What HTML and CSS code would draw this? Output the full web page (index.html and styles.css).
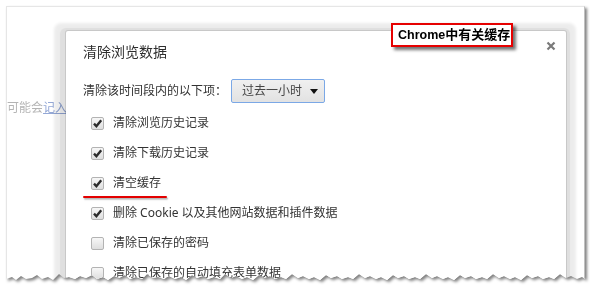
FILE: index.html
```html
<!DOCTYPE html>
<html lang="zh-CN">
<head>
<meta charset="utf-8">
<title>清除浏览数据</title>
<link rel="stylesheet" href="styles.css">
</head>
<body>
<div class="canvas">
  <div class="frame">
    <div class="page">
      <p class="page-text">可能会<a class="page-link">记入</a></p>

      <div class="dialog">
        <div class="dialog-title">清除浏览数据</div>
        <div class="range-row">
          <span class="range-label">清除该时间段内的以下项：</span>
          <div class="select">
            <span>过去一小时</span>
            <svg class="select-arrow" width="8" height="5" viewBox="0 0 8 5"><path d="M0 0H8L4 5Z" fill="#111"/></svg>
          </div>
        </div>
        <ul class="options">
          <li class="option"><span class="cb checked"><svg width="11" height="11" viewBox="0 0 11 11"><path d="M2 5.6 L4.4 8.2 L9.2 2.2" fill="none" stroke="#2b2b2b" stroke-width="2.4" stroke-linejoin="miter"/></svg></span>清除浏览历史记录</li>
          <li class="option"><span class="cb checked"><svg width="11" height="11" viewBox="0 0 11 11"><path d="M2 5.6 L4.4 8.2 L9.2 2.2" fill="none" stroke="#2b2b2b" stroke-width="2.4" stroke-linejoin="miter"/></svg></span>清除下载历史记录</li>
          <li class="option"><span class="cb checked"><svg width="11" height="11" viewBox="0 0 11 11"><path d="M2 5.6 L4.4 8.2 L9.2 2.2" fill="none" stroke="#2b2b2b" stroke-width="2.4" stroke-linejoin="miter"/></svg></span>清空缓存</li>
          <li class="option"><span class="cb checked"><svg width="11" height="11" viewBox="0 0 11 11"><path d="M2 5.6 L4.4 8.2 L9.2 2.2" fill="none" stroke="#2b2b2b" stroke-width="2.4" stroke-linejoin="miter"/></svg></span>删除 Cookie 以及其他网站数据和插件数据</li>
          <li class="option"><span class="cb"></span>清除已保存的密码</li>
          <li class="option"><span class="cb"></span>清除已保存的自动填充表单数据</li>
        </ul>
        <div class="mark-line"></div>
        <svg class="close" width="10" height="10" viewBox="0 0 10 10"><path d="M1.5 1.5 L8.5 8.5 M8.5 1.5 L1.5 8.5" stroke="#7a7a7a" stroke-width="2.2"/></svg>
      </div>

      <div class="callout"><span class="callout-en">Chrome</span>中有关缓存</div>
    </div>
  </div>
</div>
</body>
</html>
```

FILE: styles.css
```css
html, body {
  margin: 0;
  padding: 0;
  background: #ffffff;
}

body {
  width: 593px;
  height: 292px;
  overflow: hidden;
  font-family: "Noto Sans", "Noto Sans CJK SC", sans-serif;
}

.canvas {
  padding: 6px 0 0 6px;
}

.frame {
  width: 580px;
  filter: drop-shadow(2px 2px 1.5px rgba(0, 0, 0, 0.5));
}

.page {
  position: relative;
  box-sizing: border-box;
  width: 579px;
  height: 284px;
  background: #ffffff;
  border-top: 1px solid #e6e6e6;
  border-left: 1px solid #e6e6e6;
  border-right: 1px solid #c0c0c0;
  overflow: hidden;
  clip-path: polygon(0 0, 0 273px, 6px 271px, 10px 274px, 15px 270px, 20px 273px, 26px 272px, 31px 269px, 36px 273px, 42px 271px, 47px 274px, 53px 268px, 58px 272px, 63px 271px, 69px 273px, 74px 270px, 80px 272px, 86px 269px, 91px 273px, 97px 271px, 102px 274px, 108px 270px, 113px 272px, 119px 269px, 124px 273px, 130px 271px, 136px 273px, 141px 268px, 147px 272px, 152px 271px, 158px 273px, 163px 270px, 169px 273px, 175px 271px, 180px 274px, 186px 269px, 191px 272px, 197px 270px, 202px 273px, 208px 271px, 214px 273px, 219px 268px, 225px 272px, 230px 270px, 236px 273px, 241px 271px, 247px 274px, 253px 269px, 258px 272px, 264px 270px, 269px 273px, 275px 271px, 280px 273px, 286px 268px, 292px 272px, 297px 270px, 303px 273px, 308px 271px, 314px 274px, 320px 269px, 325px 272px, 331px 270px, 336px 273px, 342px 271px, 347px 273px, 353px 268px, 359px 272px, 364px 270px, 370px 273px, 375px 271px, 381px 274px, 387px 269px, 392px 272px, 398px 270px, 403px 273px, 409px 271px, 414px 273px, 420px 268px, 426px 272px, 431px 270px, 437px 273px, 442px 271px, 448px 274px, 454px 269px, 459px 272px, 465px 270px, 470px 273px, 476px 271px, 481px 273px, 487px 268px, 493px 272px, 498px 270px, 504px 273px, 509px 271px, 515px 274px, 521px 269px, 526px 272px, 532px 270px, 537px 273px, 543px 271px, 548px 273px, 554px 268px, 560px 272px, 565px 270px, 571px 273px, 576px 271px, 579px 273px, 579px 0);
}

.page-text {
  margin: 0;
  padding-top: 93px;
  font-size: 12px;
  line-height: 16px;
  color: #b4b4b4;
}

.page-link {
  color: #94a8d6;
  text-decoration: underline;
}

/* overlay dialog */
.dialog {
  position: absolute;
  left: 59px;
  top: 24px;
  width: 500px;
  height: 300px;
  box-sizing: border-box;
  padding: 11px 0 0 17px;
  background: #ffffff;
  border-radius: 2px 2px 0 0;
  box-shadow:
    0 0 0 1px rgba(0, 0, 0, 0.1),
    -1px 2px 1px 5px rgba(0, 0, 0, 0.055),
    -1px 3px 3px 11px rgba(0, 0, 0, 0.075);
  color: #333333;
}

.dialog-title {
  font-size: 14px;
  line-height: 20px;
  color: #2e2e2e;
}

.range-row {
  display: flex;
  align-items: center;
  gap: 4px;
  margin-top: 17px;
  font-size: 12px;
  line-height: 16px;
}

.range-label {
  color: #333333;
}

.select {
  box-sizing: border-box;
  width: 94px;
  height: 24px;
  display: flex;
  align-items: center;
  justify-content: space-between;
  padding: 0 6px 0 10px;
  border: 1px solid #7ba8e6;
  border-radius: 2px;
  background: linear-gradient(#f0f0f0, #e2e2e2);
  color: #444444;
}

.select-arrow {
  display: block;
}

.options {
  list-style: none;
  margin: 5px 0 0 0;
  padding: 0 0 0 8px;
}

.option {
  display: flex;
  align-items: center;
  gap: 9px;
  height: 30px;
  font-size: 12px;
  line-height: 16px;
  color: #333333;
}

.cb {
  box-sizing: border-box;
  width: 13px;
  height: 13px;
  flex: none;
  display: flex;
  align-items: center;
  justify-content: center;
  border: 1px solid #b3b3b3;
  border-radius: 2px;
  background: linear-gradient(#f7f7f7, #dedede);
}

.cb svg {
  display: block;
}

.mark-line {
  position: absolute;
  left: 17px;
  top: 165px;
  width: 84px;
  height: 2px;
  border-radius: 1px;
  background: #e30000;
  box-shadow: 1px 1.5px 1.5px rgba(0, 0, 0, 0.35);
}

.close {
  position: absolute;
  right: 10px;
  top: 10px;
  display: block;
}

/* annotation */
.callout {
  position: absolute;
  left: 384px;
  top: 16px;
  box-sizing: border-box;
  width: 122px;
  height: 24px;
  display: flex;
  align-items: center;
  padding-left: 5px;
  border: 2px solid #e60000;
  background: #ffffff;
  box-shadow: 3px 3px 3px rgba(0, 0, 0, 0.55);
  font-family: "Liberation Sans", "Noto Sans CJK SC", sans-serif;
  font-weight: bold;
  font-size: 13px;
  line-height: 16px;
  color: #000000;
}

.callout-en {
  font-size: 12.5px;
}
```
